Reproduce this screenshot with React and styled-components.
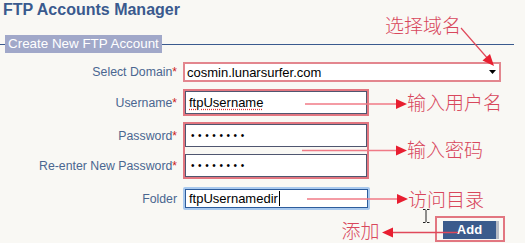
import React from "react";
import styled, { createGlobalStyle } from "styled-components";

const Global = createGlobalStyle`
  html, body { margin: 0; padding: 0; background: #f9f8f4; }
  body { font-family: "Liberation Sans", Arial, sans-serif; }
`;

const Page = styled.div`
  position: relative;
  width: 525px;
  height: 243px;
  overflow: hidden;
  background: #f9f8f4;
`;

const Title = styled.h1`
  margin: 0;
  padding: 1px 0 0 3px;
  font: bold 16px/18px "Liberation Sans", Arial, sans-serif;
  color: #3a5a8e;
`;

const LegendRow = styled.div`
  display: flex;
  align-items: center;
  margin-top: 16px;
  width: 514px;
  height: 18px;
`;

const Rule = styled.div`
  height: 1px;
  background: #3a5a8e;
  flex: ${(p) => (p.$grow ? 1 : "none")};
  width: ${(p) => (p.$w ? `${p.$w}px` : "auto")};
`;

const Legend = styled.div`
  height: 18px;
  padding: 0 3px;
  background: #a1a8c9;
  color: #ffffff;
  font: 13.4px/18px "Liberation Sans", Arial, sans-serif;
  white-space: nowrap;
`;

const Form = styled.div`
  display: flex;
  flex-direction: column;
`;

const Row = styled.div`
  display: flex;
  align-items: ${(p) => p.$align || "center"};
  margin-top: ${(p) => p.$mt}px;
  padding-left: ${(p) => p.$pl || 0}px;
`;

const LabelStack = styled.div`
  display: flex;
  flex-direction: column;
  gap: 7px;
  padding-top: 2px;
`;

const Label = styled.label`
  width: 177px;
  height: ${(p) => p.$h || 20}px;
  display: flex;
  align-items: center;
  justify-content: flex-end;
  font: 12.3px "Liberation Sans", Arial, sans-serif;
  color: #4a6690;
  white-space: nowrap;
`;

const Star = styled.span`
  color: #cc2020;
  align-self: flex-start;
  margin-top: ${(p) => p.$top || 3}px;
  font-size: 12px;
`;

const Field = styled.div`
  margin-left: 6px;
`;

const SelectBox = styled.div`
  box-sizing: border-box;
  width: 318px;
  height: 20px;
  border: 2px solid #e3868e;
  background: #ffffff;
  display: flex;
  align-items: center;
  justify-content: space-between;
  padding: 0 3px 0 2px;
  font: 13px "Liberation Sans", Arial, sans-serif;
  color: #000;
`;

const Highlight = styled.div`
  box-sizing: border-box;
  width: ${(p) => p.$w}px;
  border: 2px solid #e27680;
  padding: ${(p) => p.$pad || "0"};
  display: flex;
  flex-direction: column;
  gap: ${(p) => p.$gap || 0}px;
`;

const TextBox = styled.div`
  box-sizing: border-box;
  height: 23px;
  border: 1px solid #4f5670;
  background: #ffffff;
  display: flex;
  align-items: center;
  padding-left: 3px;
  font: 13px "Liberation Sans", Arial, sans-serif;
  color: #000;
`;

const Dots = styled.span`
  font-size: 10px;
  letter-spacing: 3.6px;
  padding-left: 2px;
`;

const Spelled = styled.span`
  text-decoration: underline dotted #e03030;
  text-underline-offset: 2px;
`;

const FocusRing = styled.div`
  box-sizing: border-box;
  width: 187px;
  height: 23px;
  padding: 2px;
  border-radius: 2px;
  background: #a9c9ee;
`;

const FocusInner = styled.div`
  box-sizing: border-box;
  height: 100%;
  border: 1px solid #2d5c9c;
  background: #fff;
  display: flex;
  align-items: center;
  padding-left: 3px;
  font: 13px "Liberation Sans", Arial, sans-serif;
  color: #000;
`;

const Caret = styled.span`
  display: inline-block;
  width: 1px;
  height: 15px;
  background: #000;
  margin-left: 1px;
`;

const ButtonFrame = styled.div`
  box-sizing: border-box;
  width: 70px;
  height: 26px;
  border: 2px solid #e27680;
  padding: 2px 4px 2px 6px;
`;

const AddButton = styled.button`
  box-sizing: border-box;
  width: 56px;
  height: 18px;
  margin: 0;
  padding: 0;
  border: none;
  border-right: 3px solid #b9bcc4;
  background: #3b5b8c;
  color: #ffffff;
  font: bold 13px/18px "Liberation Sans", Arial, sans-serif;
`;

const Overlay = styled.svg`
  position: absolute;
  left: 0;
  top: 0;
  pointer-events: none;
`;

const Note = styled.span`
  position: absolute;
  left: ${(p) => p.$x}px;
  top: ${(p) => p.$y}px;
  font: 19px/19px "Noto Sans CJK SC", sans-serif;
  font-weight: 300;
  color: #d8475c;
  white-space: nowrap;
  pointer-events: none;
`;

const LINE = "#f07a86";
const HEAD = "#e81e30";

function Annotations() {
  return (
    <>
      <Overlay width="525" height="243" viewBox="0 0 525 243">
        <line x1="461" y1="28" x2="489" y2="60" stroke="#e0485a" strokeWidth="1.2" />
        <polygon points="494,66 482.5,60.5 490,54" fill={HEAD} />
        <line x1="305" y1="104" x2="397" y2="104" stroke={LINE} strokeWidth="1.6" />
        <polygon points="396,99 407,104 396,109" fill={HEAD} />
        <line x1="302" y1="150.5" x2="397" y2="150.5" stroke={LINE} strokeWidth="1.6" />
        <polygon points="396,145.5 407,150.5 396,155.5" fill={HEAD} />
        <line x1="307" y1="199" x2="398" y2="199" stroke={LINE} strokeWidth="1.6" />
        <polygon points="397,194 408,199 397,204" fill={HEAD} />
        <line x1="392" y1="232.5" x2="458" y2="232.5" stroke="#e0485a" strokeWidth="1.4" />
        <polygon points="382,232.5 393,227.5 393,237.5" fill={HEAD} />
        <path
          d="M423 209.5h2.5M427 209.5h2.5M426 210v12M423 222.5h2.5M427 222.5h2.5"
          stroke="#222"
          strokeWidth="1"
          fill="none"
        />
      </Overlay>
      <Note $x={385} $y={15}>选择域名</Note>
      <Note $x={407} $y={91.5}>输入用户名</Note>
      <Note $x={407} $y={138.5}>输入密码</Note>
      <Note $x={408} $y={188.5}>访问目录</Note>
      <Note $x={341.5} $y={220}>添加</Note>
    </>
  );
}

export default function App() {
  return (
    <Page>
      <Global />
      <Title>FTP Accounts Manager</Title>
      <LegendRow>
        <Rule $w={5} />
        <Legend>Create New FTP Account</Legend>
        <Rule $grow />
      </LegendRow>
      <Form>
        <Row $mt={9}>
          <Label>
            Select Domain<Star>*</Star>
          </Label>
          <Field>
            <SelectBox>
              <span>cosmin.lunarsurfer.com</span>
              <svg width="7" height="4" viewBox="0 0 7 4">
                <polygon points="0,0 7,0 3.5,4" fill="#000" />
              </svg>
            </SelectBox>
          </Field>
        </Row>
        <Row $mt={7}>
          <Label $h={27}>
            Username<Star $top={7}>*</Star>
          </Label>
          <Field>
            <Highlight $w={186}>
              <TextBox>
                <Spelled>ftpUsername</Spelled>
              </TextBox>
            </Highlight>
          </Field>
        </Row>
        <Row $mt={6} $align="flex-start">
          <LabelStack>
            <Label $h={23}>
              Password<Star $top={5}>*</Star>
            </Label>
            <Label $h={23}>
              Re-enter New Password<Star $top={5}>*</Star>
            </Label>
          </LabelStack>
          <Field>
            <Highlight $w={186} $gap={7}>
              <TextBox>
                <Dots>••••••••</Dots>
              </TextBox>
              <TextBox>
                <Dots>••••••••</Dots>
              </TextBox>
            </Highlight>
          </Field>
        </Row>
        <Row $mt={8}>
          <Label $h={23}>Folder</Label>
          <Field>
            <FocusRing>
              <FocusInner>
                ftpUsernamedir
                <Caret />
              </FocusInner>
            </FocusRing>
          </Field>
        </Row>
        <Row $mt={6} $pl={435}>
          <ButtonFrame>
            <AddButton>Add</AddButton>
          </ButtonFrame>
        </Row>
      </Form>
      <Annotations />
    </Page>
  );
}
